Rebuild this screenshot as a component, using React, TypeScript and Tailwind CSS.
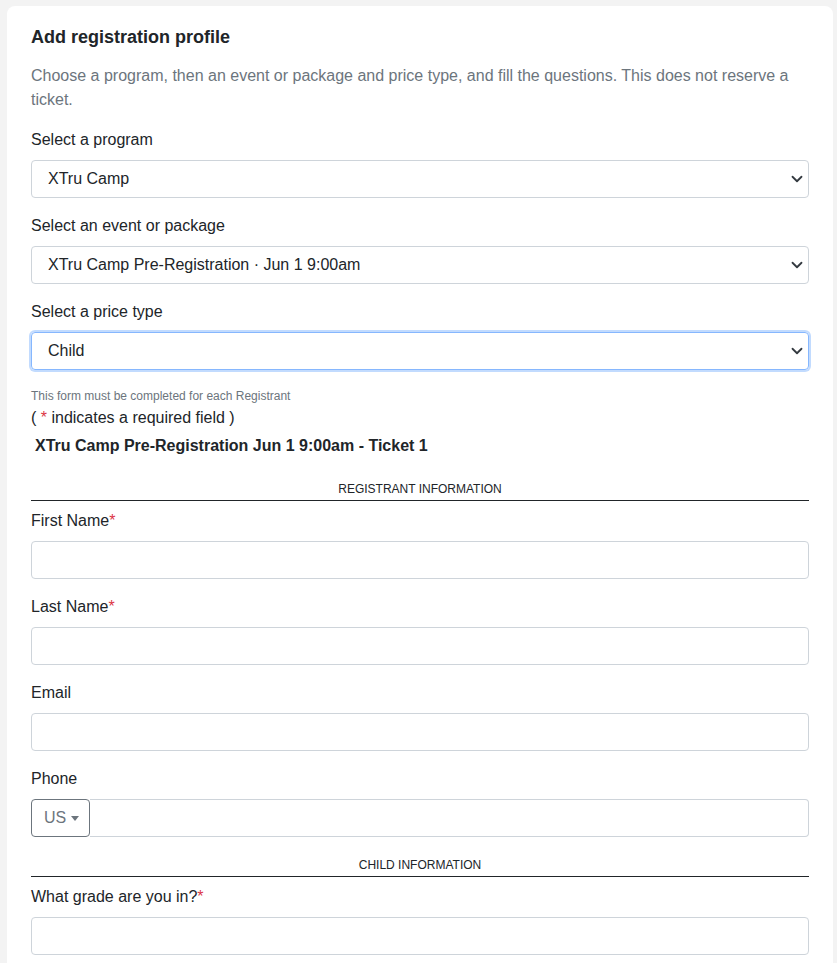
import React from "react";

function Chevron() {
  return (
    <svg width="12" height="12" viewBox="0 0 16 16" className="shrink-0">
      <path d="M2 5l6 6 6-6" fill="none" stroke="#343a40" strokeWidth="2.4" strokeLinecap="round" strokeLinejoin="round" />
    </svg>
  );
}

function SelectBox({ value, focused }: { value: string; focused?: boolean }) {
  return (
    <div
      className={
        focused
          ? "flex h-[38px] items-center justify-between rounded border border-[#86b7fe] pl-4 pr-[5px] shadow-[0_0_0_2px_rgba(13,110,253,0.25)]"
          : "flex h-[38px] items-center justify-between rounded border border-[#ced4da] pl-4 pr-[5px]"
      }
    >
      <span className="text-[#212529]">{value}</span>
      <Chevron />
    </div>
  );
}

function Field({ label, required, children }: { label: string; required?: boolean; children?: React.ReactNode }) {
  return (
    <div className="mb-4">
      <div className="mb-2 leading-6 text-[#212529]">
        {label}
        {required && <span className="text-[#dc3545]">*</span>}
      </div>
      {children ?? <div className="h-[38px] rounded border border-[#ced4da]" />}
    </div>
  );
}

function SectionHeader({ title }: { title: string }) {
  return (
    <div className="mb-2 border-b border-[#212529] pb-[2px] text-center text-xs leading-[18px] text-[#212529]">
      {title}
    </div>
  );
}

export default function App() {
  return (
    <div className="min-h-screen bg-[#f3f3f3] pl-[7px] pr-[4px] pt-[6px] font-['Liberation_Sans',Arial,sans-serif] text-base">
      <div className="rounded-lg bg-white px-6 pb-6 pt-5">
        <h2 className="mb-4 text-lg font-bold leading-[22px] text-[#212529]">Add registration profile</h2>
        <p className="mb-4 leading-6 text-[#6c757d]">
          Choose a program, then an event or package and price type, and fill the questions. This does not reserve a
          ticket.
        </p>

        <Field label="Select a program">
          <SelectBox value="XTru Camp" />
        </Field>
        <Field label="Select an event or package">
          <SelectBox value="XTru Camp Pre-Registration · Jun 1 9:00am" />
        </Field>
        <Field label="Select a price type">
          <SelectBox value="Child" focused />
        </Field>

        <div className="text-xs leading-5 text-[#6c757d]">This form must be completed for each Registrant</div>
        <div className="leading-6 text-[#212529]">
          ( <span className="text-[#dc3545]">*</span> indicates a required field )
        </div>
        <div className="mb-[22px] mt-1 pl-1 font-bold leading-6 text-[#212529]">
          XTru Camp Pre-Registration Jun 1 9:00am - Ticket 1
        </div>

        <SectionHeader title="REGISTRANT INFORMATION" />
        <Field label="First Name" required />
        <Field label="Last Name" required />
        <Field label="Email" />
        <Field label="Phone">
          <div className="flex h-[38px]">
            <button className="flex w-[59px] items-center gap-[5px] rounded border border-[#6c757d] pl-3 text-[#6c757d]">
              US
              <svg width="8" height="5" viewBox="0 0 8 5">
                <path d="M0 0h8L4 5z" fill="#6c757d" />
              </svg>
            </button>
            <div className="flex-1 rounded-r border border-l-0 border-[#ced4da]" />
          </div>
        </Field>

        <div className="mt-[19px]">
          <SectionHeader title="CHILD INFORMATION" />
        </div>
        <Field label="What grade are you in?" required />
      </div>
    </div>
  );
}
